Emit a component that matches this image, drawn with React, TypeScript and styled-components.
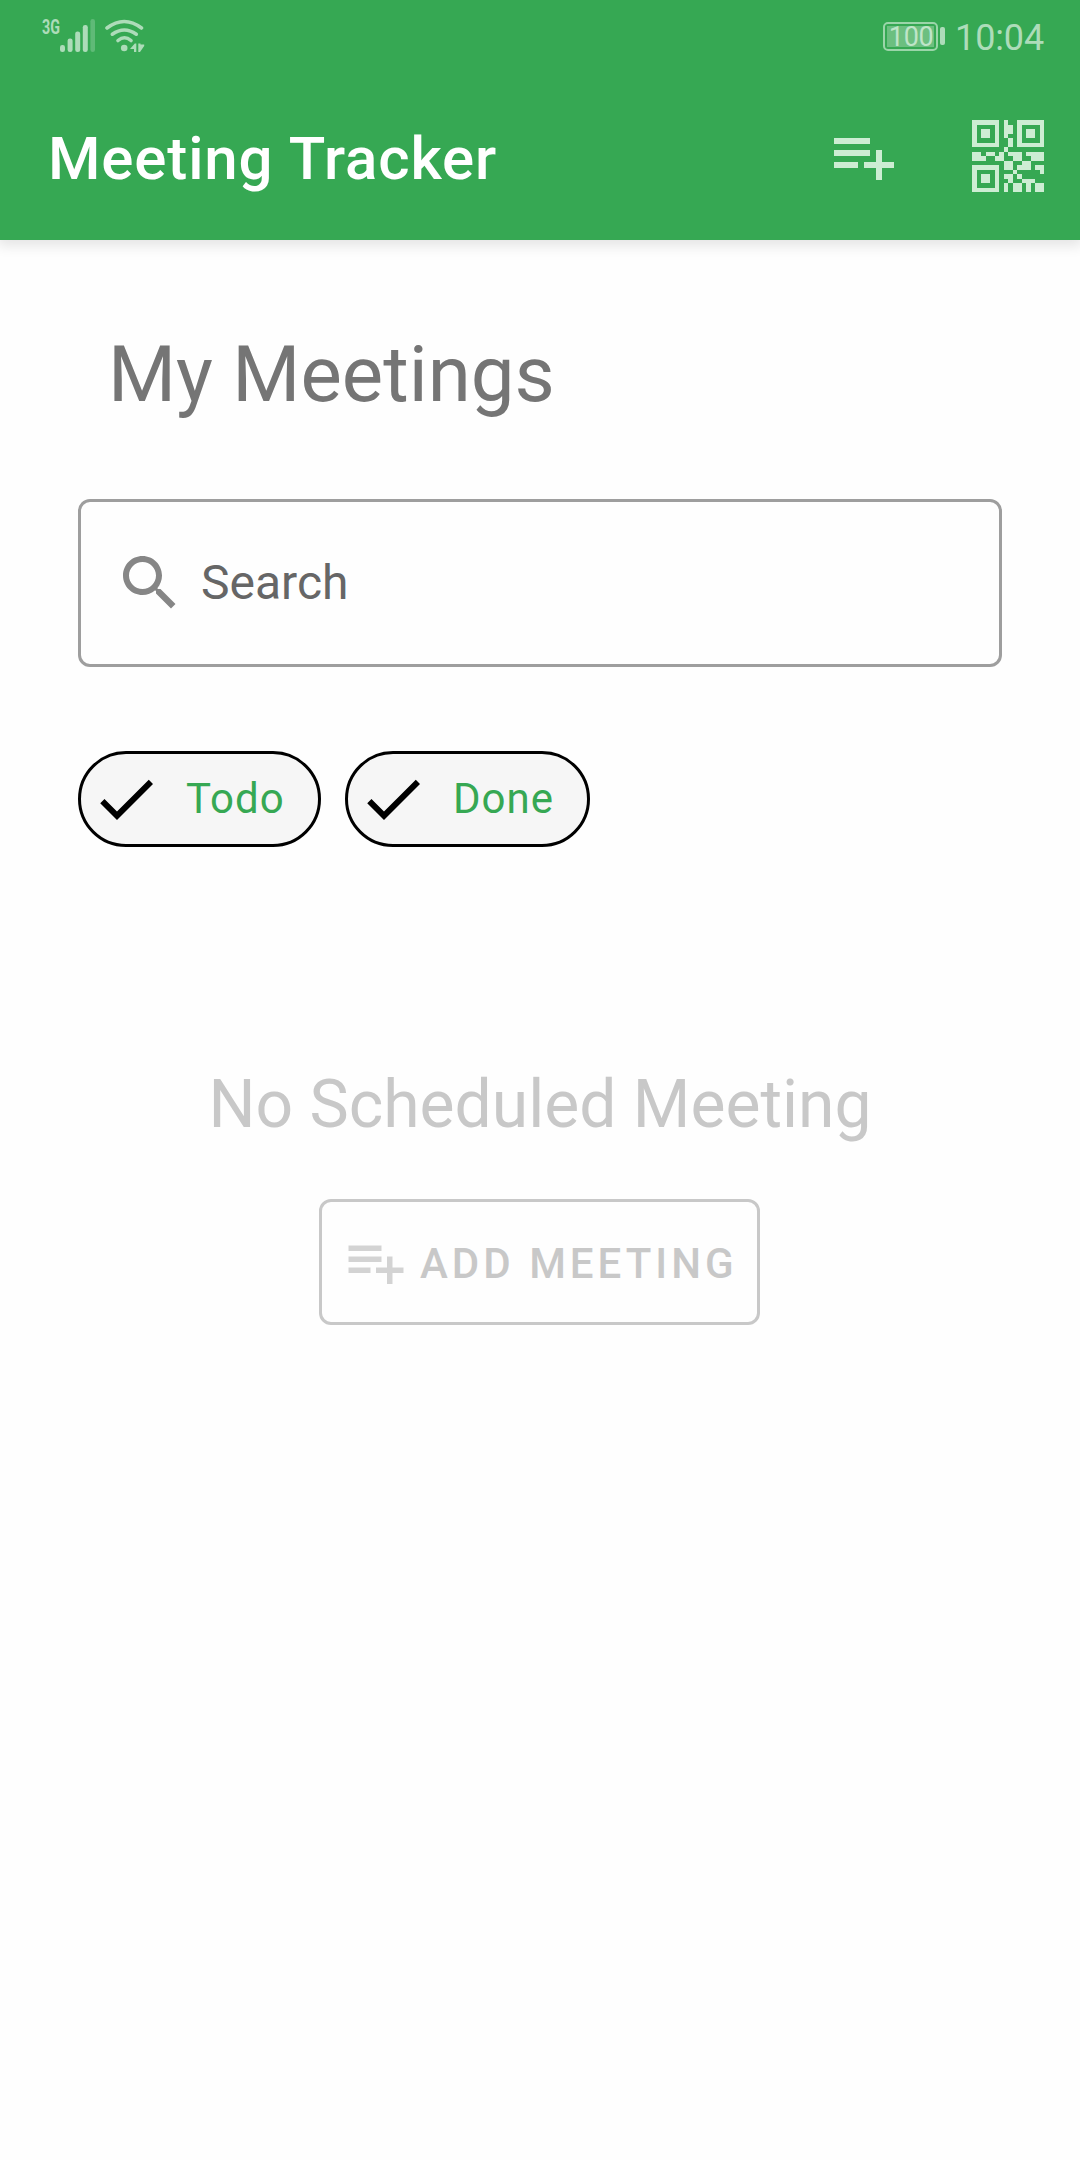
import React from "react";
import styled, { createGlobalStyle } from "styled-components";

const GlobalStyle = createGlobalStyle`
  *, *::before, *::after { box-sizing: border-box; }
  body { margin: 0; background: #fefefe; font-family: Roboto, "Liberation Sans", sans-serif; }
  svg { display: block; flex: none; }
`;

const Screen = styled.div`
  width: 1080px;
  min-height: 2160px;
  display: flex;
  flex-direction: column;
  background: #fefefe;
`;

const Header = styled.header`
  height: 240px;
  background: #36a853;
  box-shadow: 0 4px 12px 2px rgba(0, 0, 0, 0.1);
`;

const StatusBar = styled.div`
  height: 72px;
  padding: 0 36px 0 42px;
  display: flex;
  justify-content: space-between;
  align-items: center;
  color: #addcb9;
`;

const StatusGroup = styled.div`
  display: flex;
  align-items: center;
`;

const Icons = styled.div`
  display: flex;
  gap: 8px;
`;

const Network = styled.span`
  width: 18px;
  margin-top: -19px;
  font-size: 21px;
  line-height: 20px;
  font-weight: 700;
  white-space: nowrap;
  transform: scaleX(0.68);
  transform-origin: left;
`;

const Battery = styled.div`
  width: 55px;
  height: 29px;
  border: 2px solid #9bd5a9;
  border-radius: 5px;
  padding: 2px;
  display: flex;
`;

const BatteryLevel = styled.div`
  flex: 1;
  display: flex;
  align-items: center;
  justify-content: center;
  padding: 2px 0 0 1px;
  background: #6cbf80;
  color: #bfe5c8;
  font-size: 27px;
  line-height: 20px;
  letter-spacing: -0.3px;
`;

const BatteryTip = styled.div`
  width: 5px;
  height: 18px;
  margin: 0 10px 0 2px;
  border-radius: 2px;
  background: #addcb9;
`;

const Clock = styled.span`
  font-size: 36px;
  line-height: 44px;
  padding-top: 3px;
  letter-spacing: -0.15px;
`;

const Toolbar = styled.div`
  height: 168px;
  padding: 0 36px 0 48px;
  display: flex;
  align-items: center;
`;

const Title = styled.h1`
  margin: 0;
  flex: 1;
  padding-top: 5px;
  font-size: 60px;
  line-height: 70px;
  font-weight: 500;
  letter-spacing: 0.85px;
  word-spacing: 1px;
  color: #fff;
`;

const Actions = styled.div`
  display: flex;
  align-items: center;
  gap: 72px;
  color: #cdedd3;
`;

const Main = styled.main`
  padding: 89px 78px 0;
  display: flex;
  flex-direction: column;
`;

const Heading = styled.h2`
  margin: 0 0 78px 30px;
  font-size: 78px;
  line-height: 92px;
  font-weight: 400;
  color: #757575;
`;

const SearchBox = styled.div`
  height: 168px;
  padding-left: 33px;
  display: flex;
  align-items: center;
  gap: 15px;
  border: 3px solid #9e9e9e;
  border-radius: 12px;
  color: #868686;
`;

const Hint = styled.span`
  font-size: 48px;
  line-height: 56px;
  color: #666;
`;

const Chips = styled.div`
  display: flex;
  gap: 24px;
  margin-top: 84px;
`;

const Chip = styled.div<{ $width: number }>`
  width: ${(p) => p.$width}px;
  height: 96px;
  padding-left: 9px;
  display: flex;
  align-items: center;
  gap: 24px;
  border: 3px solid #000;
  border-radius: 48px;
  background: #f6f6f6;
  color: #000;
`;

const ChipLabel = styled.span`
  font-size: 42px;
  line-height: 50px;
  letter-spacing: 1.05px;
  color: #36a853;
`;

const Empty = styled.section`
  margin-top: 219px;
  display: flex;
  flex-direction: column;
  align-items: center;
`;

const EmptyText = styled.p`
  margin: 0 0 55px;
  font-size: 66px;
  line-height: 78px;
  color: #c8c8c8;
`;

const AddButton = styled.button`
  width: 441px;
  height: 126px;
  margin-right: 1px;
  padding: 0 0 0 21px;
  display: flex;
  align-items: center;
  gap: 11px;
  border: 3px solid #c8c8c8;
  border-radius: 12px;
  background: transparent;
  color: #d3d3d3;
  font-family: inherit;
`;

const AddLabel = styled.span`
  padding-top: 3px;
  font-size: 42px;
  line-height: 50px;
  font-weight: 500;
  letter-spacing: 4px;
  white-space: nowrap;
  color: #c8c8c8;
`;

const PlaylistAdd = ({ size }: { size: number }) => (
  <svg width={size} height={size} viewBox="0 0 24 24" fill="currentColor">
    <path d="M14 10H2v2h12v-2zm0-4H2v2h12V6zm4 8v-4h-2v4h-4v2h4v4h2v-4h4v-2h-4zM2 16h8v-2H2v2z" />
  </svg>
);

const QR_ROWS = [
  "111111.1..111111",
  "1....1.11.1....1",
  "1.11.1.11.1.11.1",
  "1.11.1.1..1.11.1",
  "1....1..1.1....1",
  "111111..1.111111",
  ".......1........",
  "11.11.1.111.1111",
  "111..11..11..111",
  ".......11..11...",
  "111111.11.111.11",
  "1....1...1.....1",
  "1.11.1.11.1.....",
  "1.11.1..1..111..",
  "1....1.1.11.1.11",
  "111111.1.11.1.11",
];

const QrCode = () => (
  <svg width="72" height="72" viewBox="0 0 16 16" fill="currentColor" shapeRendering="crispEdges">
    <path
      d={QR_ROWS.map((row, y) =>
        [...row].map((c, x) => (c === "1" ? `M${x} ${y}h1v1h-1z` : "")).join("")
      ).join("")}
    />
  </svg>
);

const Signal = () => (
  <svg width="36" height="34" viewBox="0 0 36 34" fill="currentColor">
    <rect x="0" y="26" width="5" height="7" rx="2.3" />
    <rect x="7.6" y="19.5" width="5" height="13.5" rx="2.3" />
    <rect x="15.2" y="12.5" width="5" height="20.5" rx="2.3" />
    <rect x="22.8" y="6" width="5" height="27" rx="2.3" />
    <rect x="30.4" y="0" width="4.6" height="33" rx="2.3" opacity="0.35" />
  </svg>
);

const Wifi = () => (
  <svg width="42" height="34" viewBox="0 0 42 34" fill="none" stroke="currentColor" strokeWidth="3.6" strokeLinecap="round">
    <path d="M3 9Q20.200-4 37.500 9" />
    <path d="M8.300 15.200Q20.300 6.800 32.300 15.200" />
    <path d="M14 21.500Q20.500 16 27 21.500" />
    <circle cx="20.200" cy="29" r="3.300" fill="currentColor" stroke="none" />
    <path
      d="M26 30l4.800-5.500h1.500V33h-2.300v-3zM34.300 24.500V33h1.700l4.200-6v-1.500h-3.700v-1z"
      fill="currentColor"
      stroke="none"
    />
  </svg>
);

const SearchIcon = () => (
  <svg width="72" height="72" viewBox="0 0 24 24" fill="currentColor">
    <path d="M15.500 14h-.79l-.28-.27C15.410 12.590 16 11.110 16 9.500 16 5.910 13.090 3 9.500 3S3 5.910 3 9.500 5.910 16 9.500 16c1.610 0 3.090-.59 4.230-1.570l.27.28v.79l5 4.990L20.490 19l-4.990-5zm-6 0C7.010 14 5 11.990 5 9.500S7.010 5 9.500 5 14 7.010 14 9.500 11.990 14 9.500 14z" />
  </svg>
);

const Check = () => (
  <svg width="72" height="72" viewBox="0 0 24 24" fill="currentColor">
    <path d="M9 16.170L4.830 12l-1.420 1.410L9 19 21 7l-1.410-1.410z" />
  </svg>
);

const CHIPS = [
  { label: "Todo", width: 243 },
  { label: "Done", width: 245 },
];

export default function App() {
  return (
    <Screen>
      <GlobalStyle />
      <Header>
        <StatusBar>
          <StatusGroup>
            <Network>3G</Network>
            <Icons>
              <Signal />
              <Wifi />
            </Icons>
          </StatusGroup>
          <StatusGroup>
            <Battery>
              <BatteryLevel>100</BatteryLevel>
            </Battery>
            <BatteryTip />
            <Clock>10:04</Clock>
          </StatusGroup>
        </StatusBar>
        <Toolbar>
          <Title>Meeting Tracker</Title>
          <Actions>
            <PlaylistAdd size={72} />
            <QrCode />
          </Actions>
        </Toolbar>
      </Header>
      <Main>
        <Heading>My Meetings</Heading>
        <SearchBox>
          <SearchIcon />
          <Hint>Search</Hint>
        </SearchBox>
        <Chips>
          {CHIPS.map((chip) => (
            <Chip key={chip.label} $width={chip.width}>
              <Check />
              <ChipLabel>{chip.label}</ChipLabel>
            </Chip>
          ))}
        </Chips>
        <Empty>
          <EmptyText>No Scheduled Meeting</EmptyText>
          <AddButton>
            <PlaylistAdd size={66} />
            <AddLabel>ADD MEETING</AddLabel>
          </AddButton>
        </Empty>
      </Main>
    </Screen>
  );
}
